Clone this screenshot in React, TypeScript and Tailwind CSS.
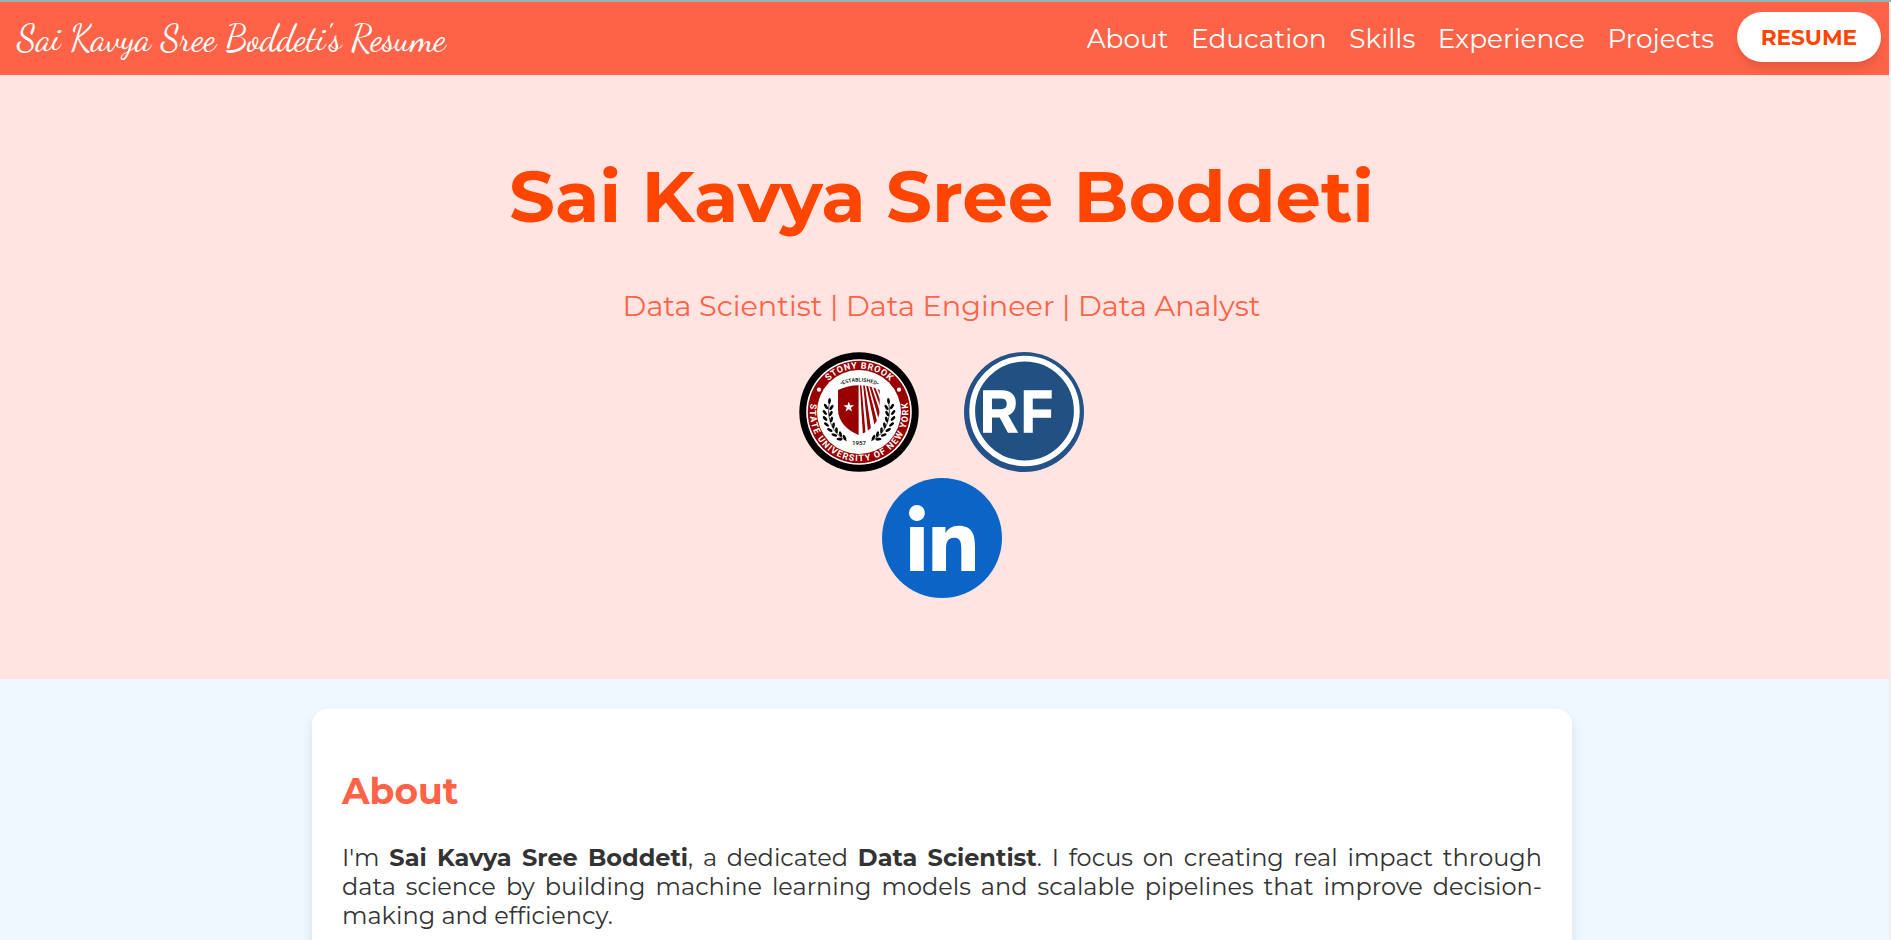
import { FaLinkedinIn } from "react-icons/fa";

const links = ["About", "Education", "Skills", "Experience", "Projects"];

const leaves: [number, number, number][] = [
  [30.5, 49, 5], [27, 54.5, -35], [32.5, 55.5, 35], [25.8, 60.5, -38], [31.8, 61.5, 30],
  [26, 66.5, -45], [32.5, 67.5, 18], [27.5, 72.5, -52], [34.5, 73.2, 8], [30.8, 78, -62],
  [37.5, 78.2, -2], [35.3, 83, -72], [41.5, 82.2, -14], [40.5, 87.2, -84], [45.5, 85.6, -30],
];

function Laurel() {
  return (
    <g>
      <path d="M30.5 50C28 62 30 80 48 89" fill="none" stroke="#000" strokeWidth="0.7" />
      {leaves.map(([x, y, a]) => (
        <ellipse key={`${x}-${y}`} cx={x} cy={y} rx="1.4" ry="3" transform={`rotate(${a} ${x} ${y})`} />
      ))}
    </g>
  );
}

function UniversitySeal() {
  return (
    <svg viewBox="0 0 120 120" className="size-[120px]" role="img">
      <defs>
        <path id="seal-top" d="M16.5 60A43.5 43.5 0 0 1 103.5 60" />
        <path id="seal-bottom" d="M11.7 50.7A49.2 49.2 0 1 0 108.3 50.7" />
        <path id="seal-est" d="M41.5 33.5Q60 25.5 78.5 33.5" />
        <clipPath id="shield-right">
          <path d="M60.8 33.3Q71 33.5 80.7 38V57C80.7 70 72 78 60.8 83Z" />
        </clipPath>
      </defs>
      <circle cx="60" cy="60" r="59.7" fill="#000" />
      <circle cx="60" cy="60" r="52.8" fill="#fff" />
      <circle cx="60" cy="60" r="51.2" fill="#990000" />
      <circle cx="60" cy="60" r="42" fill="#fff" />
      <g fill="#fff" fontFamily="Roboto, sans-serif" fontWeight="700" fontSize="9">
        <text>
          <textPath href="#seal-top" startOffset="34.3" textLength="68">STONY BROOK</textPath>
        </text>
        <text>
          <textPath href="#seal-bottom" startOffset="1" textLength="172">STATE UNIVERSITY OF NEW YORK</textPath>
        </text>
      </g>
      <circle cx="20" cy="37.7" r="2.1" fill="#fff" />
      <circle cx="100" cy="37.7" r="2.1" fill="#fff" />
      <text fontFamily="Roboto, sans-serif" fontWeight="500" fontSize="5.2">
        <textPath href="#seal-est" startOffset="0.5" textLength="38">•ESTABLISHED•</textPath>
      </text>
      <path d="M59.6 33.3Q49 33.5 39 38V57C39 70 48 78 59.6 83Z" fill="#990000" />
      <g clipPath="url(#shield-right)" fill="#990000">
        <path d="M60.8 32L62.3 32L66.8 84H64Z" />
        <path d="M64 32H65.6L73 84H69.4Z" />
        <path d="M66.8 32H68.6L80 77L77 80Z" />
        <path d="M69.8 32H71.6L83.4 67L81 72Z" />
        <path d="M73 32H74.8L84 55V62Z" />
        <path d="M76.5 32H84V50Z" />
      </g>
      <path d="M49.8 49.5l1.3 3.8h4l-3.2 2.4 1.2 3.8-3.3-2.3-3.3 2.3 1.2-3.8-3.2-2.4h4z" fill="#fff" />
      <Laurel />
      <g transform="translate(120 0) scale(-1 1)">
        <Laurel />
      </g>
      <text x="60" y="93" textAnchor="middle" fontFamily="Roboto, sans-serif" fontWeight="500" fontSize="6.2">1957</text>
    </svg>
  );
}

function ResearchFoundationBadge() {
  return (
    <svg viewBox="0 0 120 120" className="size-[120px]" role="img">
      <circle cx="60" cy="60" r="60" fill="#245188" />
      <circle cx="60.5" cy="59" r="52.3" fill="#215083" stroke="#fff" strokeWidth="5.8" />
      <g fill="#fff" stroke="#fff" strokeWidth="1.6" fontFamily="'Liberation Sans', sans-serif" fontWeight="700" fontSize="60">
        <text transform="translate(16.3 80.3) scale(0.87 1)">R</text>
        <text transform="translate(57 80.3) scale(0.87 1)">F</text>
      </g>
    </svg>
  );
}

function LinkedInBadge() {
  return (
    <div className="size-[120px] rounded-full bg-[#0b65c6] pt-[27px] pl-[27px]">
      <FaLinkedinIn className="h-[75.4px] w-[66px] text-white" />
    </div>
  );
}

export default function App() {
  return (
    <div className="h-[940px] overflow-hidden border-t-2 border-[#92b4b5] bg-[#f1efef] pr-[2px] font-['Montserrat','Inter',sans-serif] text-[#333]">
      <header className="flex h-[73px] items-center justify-between bg-[#ff6347] pr-2 pl-[17px] text-white">
        <div className="font-['Dancing_Script',cursive] text-[36px] leading-none">Sai Kavya Sree Boddeti's Resume</div>
        <nav className="flex items-center gap-[22.5px] text-[26.4px]">
          {links.map((l) => (
            <a key={l} href={`#${l.toLowerCase()}`}>{l}</a>
          ))}
          <a href="#resume" className="mb-[3px] flex h-[50px] items-center rounded-full bg-white px-6 text-[21.6px] font-bold text-[#ff4500] shadow-[0_6px_9px_rgba(0,0,0,0.1)]">RESUME</a>
        </nav>
      </header>
      <section className="flex h-[604px] flex-col items-center bg-[#ffe4e1] pt-[77px] pr-[6px]">
        <h1 className="text-[72px] leading-[88px] font-bold text-[#ff4500]">Sai Kavya Sree Boddeti</h1>
        <p className="mt-[48px] text-[28.8px] leading-[36px] text-[#ff6347]">Data Scientist | Data Engineer | Data Analyst</p>
        <div className="mt-[28px] flex w-[300px] flex-wrap justify-center gap-x-[45px] gap-y-[6px]">
          <UniversitySeal />
          <ResearchFoundationBadge />
          <LinkedInBadge />
        </div>
      </section>
      <main className="h-[261px] bg-[#f0f8ff] pt-[30px] pl-[312px]">
        <article className="h-[600px] w-[1260px] rounded-[15px] bg-white px-[30px] pt-[60px] shadow-[0_6px_12px_rgba(0,0,0,0.1)]">
          <h2 className="text-[36px] leading-[44px] font-bold text-[#ff6347]">About</h2>
          <p className="mt-[30px] text-justify text-[24px] leading-[29px]">
            I'm <strong className="font-bold">Sai Kavya Sree Boddeti</strong>, a dedicated <strong className="font-bold">Data Scientist</strong>. I focus on creating real impact through data science by building machine learning models and scalable pipelines that improve decision-making and efficiency.
          </p>
        </article>
      </main>
    </div>
  );
}
